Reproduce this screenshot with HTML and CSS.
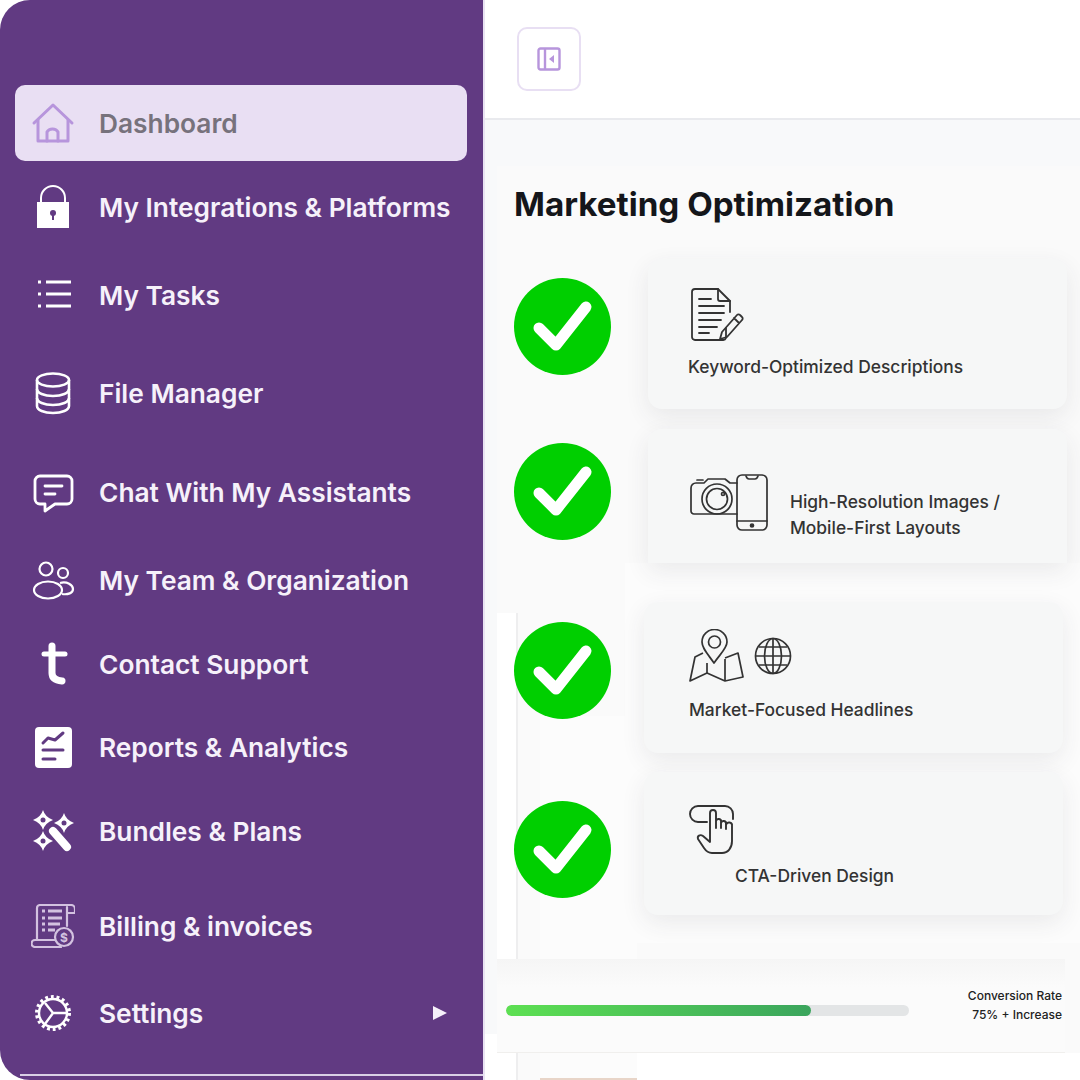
FILE: index.html
```html
<!DOCTYPE html>
<html lang="en">
<head>
    <meta charset="UTF-8">
    <meta name="viewport" content="width=device-width, initial-scale=1.0">
    <title>Marketing Optimization</title>
    <link rel="stylesheet" href="styles.css">
</head>
<body>
    <!-- Sidebar -->
    <aside class="sidebar">
        <nav class="nav">
            <a class="nav-item active">
                <svg class="nav-icon" viewBox="0 0 44 44" fill="none" stroke="#b795dc" stroke-width="3" stroke-linecap="round" stroke-linejoin="round">
                    <path d="M3 22 L22 4 L41 22"/>
                    <path d="M7 19 V40 H37 V19"/>
                    <path d="M16 40 V31 a6 5 0 0 1 11 0 V40"/>
                </svg>
                <span>Dashboard</span>
            </a>
            <a class="nav-item">
                <svg class="nav-icon" viewBox="0 0 44 44" fill="none" stroke="#fff" stroke-width="2">
                    <path d="M10 18 V13 a12 12 0 0 1 24 0 V18"/>
                    <rect x="6" y="17" width="32" height="26" fill="#fff" stroke="none"/>
                    <circle cx="22" cy="28" r="3" fill="#613a82" stroke="none"/>
                    <rect x="21" y="29" width="2" height="6" fill="#613a82" stroke="none"/>
                </svg>
                <span>My Integrations &amp; Platforms</span>
            </a>
            <a class="nav-item">
                <svg class="nav-icon" viewBox="0 0 44 44" fill="none" stroke="#fff" stroke-width="3">
                    <path d="M7 9 H10 M7 21 H10 M7 33 H10"/>
                    <path d="M15 9 H40 M15 21 H40 M15 33 H40"/>
                </svg>
                <span>My Tasks</span>
            </a>
            <a class="nav-item">
                <svg class="nav-icon" viewBox="0 0 44 44" fill="none" stroke="#fff" stroke-width="2.6">
                    <ellipse cx="22" cy="9" rx="16" ry="6.5"/>
                    <path d="M6 9 V35 C6 39 13 42 22 42 C31 42 38 39 38 35 V9"/>
                    <path d="M6 18 C6 22 13 25 22 25 C31 25 38 22 38 18"/>
                    <path d="M6 27 C6 31 13 34 22 34 C31 34 38 31 38 27"/>
                </svg>
                <span>File Manager</span>
            </a>
            <a class="nav-item">
                <svg class="nav-icon" viewBox="0 0 44 44" fill="none" stroke="#fff" stroke-width="2.8" stroke-linejoin="round" stroke-linecap="round">
                    <path d="M9 6 H36 a5 5 0 0 1 5 5 V29 a5 5 0 0 1 -5 5 H24 L14 41 V34 H9 a5 5 0 0 1 -5 -5 V11 a5 5 0 0 1 5 -5 Z"/>
                    <path d="M14 16 H31 M14 24 H24"/>
                </svg>
                <span>Chat With My Assistants</span>
            </a>
            <a class="nav-item">
                <svg class="nav-icon" viewBox="0 0 44 44" fill="none" stroke="#fff" stroke-width="2.2">
                    <circle cx="15" cy="11" r="6.5"/>
                    <circle cx="32" cy="15" r="5"/>
                    <ellipse cx="17" cy="32" rx="14" ry="8.500"/>
                    <path d="M29 25 C36 23 42 27 42 31 C42 35 37 37 31 36"/>
                </svg>
                <span>My Team &amp; Organization</span>
            </a>
            <a class="nav-item">
                <svg class="nav-icon" viewBox="0 0 44 44" fill="none" stroke="#fff" stroke-width="7" stroke-linecap="round">
                    <path d="M21 4 V31 Q21 38 31 39"/>
                    <path d="M13 12 H34" stroke-width="5"/>
                </svg>
                <span>Contact Support</span>
            </a>
            <a class="nav-item">
                <svg class="nav-icon" viewBox="0 0 44 44" fill="none" stroke="#613a82" stroke-width="3" stroke-linecap="round" stroke-linejoin="round">
                    <rect x="4" y="2" width="37" height="41" rx="4" fill="#fff" stroke="none"/>
                    <path d="M12 18 L17 13 L24 15 L32 8"/>
                    <path d="M12 25 H32 M12 34 H24"/>
                </svg>
                <span>Reports &amp; Analytics</span>
            </a>
            <a class="nav-item">
                <svg class="nav-icon" viewBox="0 0 44 44">
                    <path fill="#fff" d="M12 1 Q14 8 22 11 Q14 14 12 21 Q10 14 2 11 Q10 8 12 1 Z"/>
                    <path fill="#fff" d="M33 4 Q35 11 43 14 Q35 17 33 24 Q31 17 23 14 Q31 11 33 4 Z"/>
                    <path fill="#fff" d="M12 22 Q14 29 22 32 Q14 35 12 42 Q10 35 2 32 Q10 29 12 22 Z"/>
                    <circle cx="12" cy="11" r="2.500" fill="#613a82"/>
                    <circle cx="33" cy="14" r="2.500" fill="#613a82"/>
                    <circle cx="12" cy="32" r="2.500" fill="#613a82"/>
                    <path d="M22 22 L36 38" fill="none" stroke="#613a82" stroke-width="11" stroke-linecap="round"/>
                    <path d="M22 22 L36 38" fill="none" stroke="#fff" stroke-width="8" stroke-linecap="round"/>
                </svg>
                <span>Bundles &amp; Plans</span>
            </a>
            <a class="nav-item">
                <svg class="nav-icon" viewBox="0 0 44 44" fill="none" stroke="#d3c2e0" stroke-width="2.2" stroke-linejoin="round" stroke-linecap="round">
                    <path d="M6 36 V4 a3 3 0 0 1 3 -3 H40 a4 4 0 0 1 4 4 V9 H37"/>
                    <path d="M36 3 V22"/>
                    <path d="M4 36 H26 M4 36 a3.500 3.500 0 0 0 0 7 H30"/>
                    <path d="M11 7 H14 M17 7 H31 M11 14 H14 M17 14 H31 M11 20 H14 M17 20 H29 M11 26 H14 M17 26 H24" stroke-width="3" stroke-linecap="butt"/>
                    <circle cx="33" cy="33" r="9" fill="#613a82"/>
                    <text class="billing-sign" x="33" y="37.500" text-anchor="middle" fill="#d3c2e0" stroke="none">$</text>
                </svg>
                <span>Billing &amp; invoices</span>
            </a>
            <a class="nav-item">
                <svg class="nav-icon" viewBox="0 0 44 44" fill="none" stroke="#fff">
                    <circle cx="22" cy="22" r="16" stroke-width="4" stroke-dasharray="2.800 2.800"/>
                    <circle cx="22" cy="22" r="14" stroke-width="2.400"/>
                    <path d="M22 22 L14 12 M22 22 L36 22 M22 22 L14 33" stroke-width="2.400"/>
                </svg>
                <span>Settings</span>
                <span class="nav-arrow"></span>
            </a>
        </nav>
        <div class="sidebar-line"></div>
    </aside>

    <!-- Main area -->
    <main class="main">
        <header class="topbar">
            <button class="toggle" type="button">
                <svg width="24" height="24" viewBox="0 0 24 24" fill="none" stroke="#b795dc" stroke-width="2.400">
                    <rect x="1.500" y="1.500" width="21" height="21" rx="2"/>
                    <path d="M8 1 V23"/>
                    <path d="M17 8 L12 12 L17 16 Z" fill="#b795dc" stroke="none"/>
                </svg>
            </button>
        </header>

        <section class="board">
            <div class="patch patch-mid"></div>
            <div class="patch patch-left"></div>
            <div class="patch patch-inner"></div>
            <div class="patch patch-bottom"></div>

            <h1 class="title">Marketing Optimization</h1>

            <div class="steps">
                <div class="step step-one">
                    <svg class="check" viewBox="0 0 97 97"><circle cx="48.500" cy="48.500" r="48.500" fill="#00cf00"/><path d="M25 50 L42 67 L72 29" fill="none" stroke="#fff" stroke-width="11" stroke-linecap="round" stroke-linejoin="round"/></svg>
                    <div class="card card-stack">
                        <svg class="card-icon" width="54" height="54" viewBox="0 0 54 54" fill="none" stroke="#333" stroke-width="1.800" stroke-linecap="round" stroke-linejoin="round">
                            <path d="M35 40 V50 a3 3 0 0 1 -3 2 H4 a3 3 0 0 1 -3 -3 V4 a3 3 0 0 1 3 -3 H27 L39 13 V24"/>
                            <path d="M27 1 V11 a2 2 0 0 0 2 2 H39"/>
                            <path d="M8 11 H20 M8 18 H33 M8 25 H33 M8 32 H30 M8 39 H26 M8 45 H18"/>
                            <path d="M31 44 L46 27 a2 2 0 0 1 3 0 L51 29 a2 2 0 0 1 0 3 L36 49 L29 51 Z M43 30 L48 35"/>
                        </svg>
                        <p class="card-text">Keyword-Optimized Descriptions</p>
                    </div>
                </div>
                <div class="step step-two">
                    <svg class="check" viewBox="0 0 97 97"><circle cx="48.500" cy="48.500" r="48.500" fill="#00cf00"/><path d="M25 50 L42 67 L72 29" fill="none" stroke="#fff" stroke-width="11" stroke-linecap="round" stroke-linejoin="round"/></svg>
                    <div class="card card-row">
                        <svg width="79" height="58" viewBox="0 0 79 58" fill="none" stroke="#333" stroke-width="1.700" stroke-linecap="round" stroke-linejoin="round">
                            <path d="M47 40 H4 a3 3 0 0 1 -3 -3 V14 a5 5 0 0 1 5 -5 H14 L18 5 H35 L40 9 H47"/>
                            <path d="M7 6 H13"/>
                            <circle cx="27" cy="25" r="15"/>
                            <circle cx="27" cy="25" r="10.500"/>
                            <circle cx="33" cy="20" r="1.500"/>
                            <rect x="47" y="1" width="30" height="55" rx="5"/>
                            <path d="M56 2 Q57 5 59 5 H65 Q67 5 68 2 M47 47 H77"/>
                            <circle cx="62" cy="51.500" r="1.500" fill="#333"/>
                        </svg>
                        <p class="card-text">High-Resolution Images /<br>Mobile-First Layouts</p>
                    </div>
                </div>
                <div class="step step-three">
                    <svg class="check" viewBox="0 0 97 97"><circle cx="48.500" cy="48.500" r="48.500" fill="#00cf00"/><path d="M25 50 L42 67 L72 29" fill="none" stroke="#fff" stroke-width="11" stroke-linecap="round" stroke-linejoin="round"/></svg>
                    <div class="card card-stack">
                        <div class="card-icons">
                            <svg width="56" height="54" viewBox="0 0 56 54" fill="none" stroke="#333" stroke-width="1.700" stroke-linejoin="round">
                                <path d="M25 34 C18 24 13 19 13 13 a12.500 12.500 0 0 1 25 0 C38 19 32 24 25 34 Z"/>
                                <circle cx="25.500" cy="13" r="6"/>
                                <path d="M14 24 L6 28 L1 52 L18 44 L36 52 L54 48 L49 24 L36 29"/>
                                <path d="M18 34 V44 M36 30 V52"/>
                            </svg>
                            <svg width="38" height="38" viewBox="0 0 38 38" fill="none" stroke="#333" stroke-width="1.700">
                                <circle cx="19" cy="19" r="17.500"/>
                                <ellipse cx="19" cy="19" rx="8.500" ry="17.500"/>
                                <path d="M19 2 V36 M2 19 H36 M5 10 H33 M5 28 H33"/>
                            </svg>
                        </div>
                        <p class="card-text">Market-Focused Headlines</p>
                    </div>
                </div>
                <div class="step step-four">
                    <svg class="check" viewBox="0 0 97 97"><circle cx="48.500" cy="48.500" r="48.500" fill="#00cf00"/><path d="M25 50 L42 67 L72 29" fill="none" stroke="#fff" stroke-width="11" stroke-linecap="round" stroke-linejoin="round"/></svg>
                    <div class="card card-stack">
                        <svg class="card-icon" width="46" height="50" viewBox="0 0 46 50" fill="none" stroke="#333" stroke-width="1.900" stroke-linecap="round" stroke-linejoin="round">
                            <path d="M18 17 H9 a8 8 0 0 1 0 -16 H36 a8 8 0 0 1 8 8 V14"/>
                            <path d="M33 48 H23 C19 48 17 46 15 43 L9 34 C8 31 11 29 14 31 L21 37 V8 a3 3 0 0 1 6 0 V23 V16 a2.500 2.500 0 0 1 5 1 V23 V18 a2.500 2.500 0 0 1 5 1 V24 V20 a2.500 2.500 0 0 1 6 1 V36 C43 43 39 48 33 48 Z"/>
                        </svg>
                        <p class="card-text card-text-indent">CTA-Driven Design</p>
                    </div>
                </div>
            </div>

            <div class="progress-strip">
                <div class="progress-track"><div class="progress-fill" style="width: 75.700%"></div></div>
                <div class="progress-label">Conversion Rate<br>75% + Increase</div>
            </div>
        </section>
    </main>
</body>
</html>
```

FILE: styles.css
```css
* {
    box-sizing: border-box;
}
html, body {
    height: 100%;
}
body {
    margin: 0;
    display: flex;
    height: 1080px;
    overflow: hidden;
    background: #fff;
    font-family: Inter, "Liberation Sans", sans-serif;
}

/* Sidebar */
.sidebar {
    position: relative;
    width: 485px;
    flex: none;
    padding: 85px 16px 0 15px;
    background: #613a82;
    border-right: 2px solid #e9e3f2;
    border-radius: 30px 0 0 30px;
}
.nav {
    display: grid;
    grid-template-columns: minmax(0, 1fr);
    grid-template-rows: 76px 92px 84px 112px 86px 90px 78px 88px 80px 110px 64px;
}
.nav-item {
    display: flex;
    align-items: center;
    gap: 24px;
    padding: 0 20px 0 16px;
    color: #f6f1fa;
    font-size: 26.3px;
    font-weight: 600;
    white-space: nowrap;
}
.nav-item.active {
    background: #e9dff3;
    color: #77727c;
    border-radius: 10px;
}
.nav-icon {
    width: 44px;
    height: 44px;
    flex: none;
}
.billing-sign {
    font-size: 12px;
    font-weight: 700;
}
.nav-arrow {
    margin-left: auto;
    width: 0;
    height: 0;
    border-left: 14px solid #f6f1fa;
    border-top: 7px solid transparent;
    border-bottom: 7px solid transparent;
}
.sidebar-line {
    position: absolute;
    left: 20px;
    right: 0;
    bottom: 4px;
    height: 2px;
    background: #d9cfe5;
}

/* Main */
.main {
    flex: 1;
    min-width: 0;
    display: flex;
    flex-direction: column;
}
.topbar {
    height: 120px;
    flex: none;
    padding: 27px 0 0 32px;
    background: #fff;
    border-bottom: 2px solid #e9eaee;
}
.toggle {
    display: flex;
    align-items: center;
    justify-content: center;
    width: 64px;
    height: 64px;
    padding: 0;
    background: #fff;
    border: 2px solid #e8dff3;
    border-radius: 10px;
}
.board {
    position: relative;
    flex: 1;
    margin-top: 46px;
    margin-left: 12px;
    padding-left: 17px;
    background: #fafafa;
    box-shadow: 0 -46px 0 #f8f9fa, -12px -46px 0 #f8f9fa, 0 -1px 0 #fff, -12px 0 0 #fff;
}
.patch {
    position: absolute;
}
.patch-mid {
    left: 128px;
    right: 0;
    top: 397px;
    height: 380px;
    background: #fcfcfc;
}
.patch-left {
    left: 0;
    top: 447px;
    bottom: 0;
    width: 21px;
    background: #fff;
    border-right: 2px solid #eeeeef;
}
.patch-inner {
    left: 43px;
    top: 550px;
    bottom: 0;
    width: 97px;
    background: #fcfcfc;
    border-bottom: 2px solid #e8d5c8;
}
.patch-bottom {
    left: 140px;
    right: 0;
    top: 887px;
    bottom: 0;
    background: #fff;
}
.title {
    position: relative;
    margin: 0;
    padding-top: 18px;
    height: 93px;
    color: #14161a;
    font-size: 33.2px;
    font-weight: 700;
    line-height: 40px;
}

/* Steps */
.steps {
    position: relative;
    display: flex;
    flex-direction: column;
}
.step {
    display: flex;
    align-items: flex-start;
    gap: 37px;
}
.check {
    width: 97px;
    height: 97px;
    flex: none;
}
.card {
    width: 419px;
    background: #f6f7f7;
    border-radius: 14px;
    box-shadow: 0 8px 24px rgba(60, 60, 70, 0.09);
}
.card-stack {
    display: flex;
    flex-direction: column;
    padding-left: 45px;
}
.card-row {
    display: flex;
    align-items: flex-start;
    gap: 21px;
    padding: 45px 0 0 42px;
}
.card-icons {
    display: flex;
    align-items: center;
    gap: 9px;
}
.card-text {
    margin: 0;
    color: #333;
    font-size: 17.4px;
    font-weight: 500;
    line-height: 26px;
    white-space: nowrap;
}
.step-one .card {
    height: 150px;
    padding-top: 29px;
}
.step-one .card-icon {
    margin: 0 0 12px -2px;
}
.step-one .card-text {
    margin-left: -5px;
}
.step-one .check {
    margin-top: 19px;
}
.step-two {
    margin-top: 20px;
}
.step-two .check {
    margin-top: 14px;
}
.step-two .card {
    height: 134px;
    border-radius: 14px 14px 0 0;
}
.step-two .card-text {
    margin-top: 15px;
}
.step-three {
    margin-top: 39px;
}
.step-three .check {
    margin-top: 20px;
}
.step-three .card {
    height: 151px;
    margin-left: -4px;
    padding-top: 27px;
}
.step-three .card-text {
    margin-top: 14px;
}
.step-four {
    margin-top: 19px;
}
.step-four .check {
    margin-top: 29px;
}
.step-four .card {
    height: 143px;
    margin-left: -4px;
    padding-top: 33px;
}
.step-four .card-text-indent {
    margin: 8px 0 0 46px;
}

/* Progress strip */
.progress-strip {
    position: absolute;
    left: 0;
    right: 15px;
    top: 793px;
    height: 94px;
    display: flex;
    align-items: flex-start;
    padding: 25px 3px 0 9px;
    background: linear-gradient(to bottom, #f5f5f5, #fbfbfb 30%);
    border-bottom: 1px solid #f0efed;
}
.progress-track {
    width: 403px;
    height: 11px;
    margin-top: 21px;
    background: #e3e5e6;
    border-radius: 6px;
    overflow: hidden;
}
.progress-fill {
    height: 100%;
    background: linear-gradient(to right, #5de052, #3ba55d);
    border-radius: 6px;
}
.progress-label {
    margin-left: auto;
    margin-top: 2px;
    color: #222;
    font-size: 12px;
    font-weight: 500;
    line-height: 19px;
    text-align: right;
}
```
